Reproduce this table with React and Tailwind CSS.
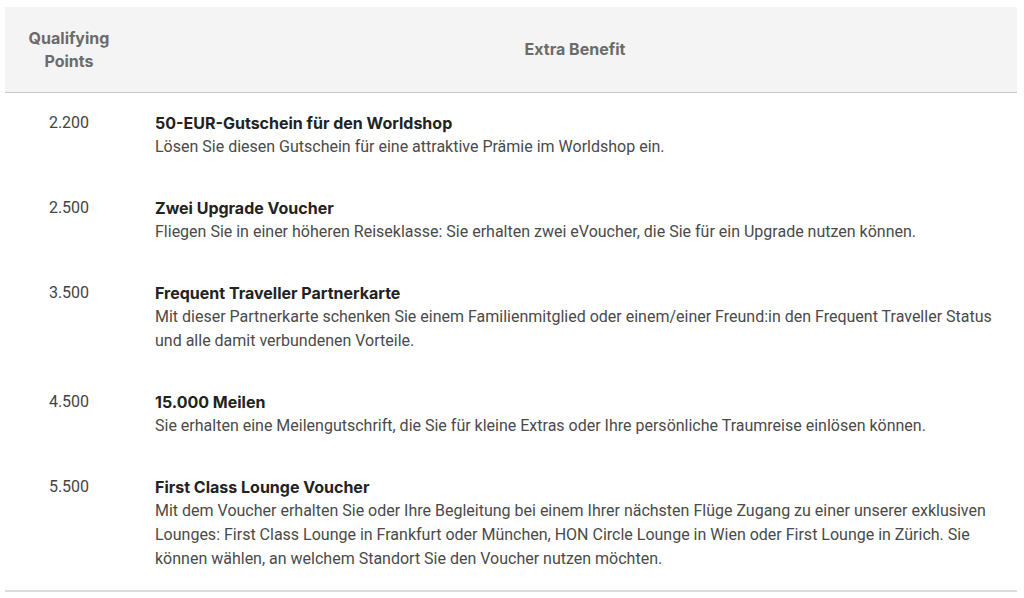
import React from "react";

const rows = [
  {
    pts: "2.200",
    title: "50-EUR-Gutschein für den Worldshop",
    desc: "Lösen Sie diesen Gutschein für eine attraktive Prämie im Worldshop ein.",
  },
  {
    pts: "2.500",
    title: "Zwei Upgrade Voucher",
    desc: "Fliegen Sie in einer höheren Reiseklasse: Sie erhalten zwei eVoucher, die Sie für ein Upgrade nutzen können.",
  },
  {
    pts: "3.500",
    title: "Frequent Traveller Partnerkarte",
    desc: "Mit dieser Partnerkarte schenken Sie einem Familienmitglied oder einem/einer Freund:in den Frequent Traveller Status und alle damit verbundenen Vorteile.",
  },
  {
    pts: "4.500",
    title: "15.000 Meilen",
    desc: "Sie erhalten eine Meilengutschrift, die Sie für kleine Extras oder Ihre persönliche Traumreise einlösen können.",
  },
  {
    pts: "5.500",
    title: "First Class Lounge Voucher",
    desc: "Mit dem Voucher erhalten Sie oder Ihre Begleitung bei einem Ihrer nächsten Flüge Zugang zu einer unserer exklusiven Lounges: First Class Lounge in Frankfurt oder München, HON Circle Lounge in Wien oder First Lounge in Zürich. Sie können wählen, an welchem Standort Sie den Voucher nutzen möchten.",
  },
];

export default function App() {
  return (
    <div
      className="w-[1024px] h-[598px] bg-white pt-[7px] px-[5px]"
      style={{ fontFamily: "Roboto, 'Liberation Sans', sans-serif" }}
    >
      <div className="w-[1012px] border-b-2 border-[#dcdcdc]">
        <div
          className="flex h-[86px] bg-[#f4f4f4] border-b border-[#c8c8c8] text-[16px] font-bold text-[#6b6b6b] leading-[23px]"
          style={{ fontFamily: "Inter, 'Liberation Sans', sans-serif" }}
        >
          <div className="w-[128px] flex items-center justify-center text-center">
            Qualifying
            <br />
            Points
          </div>
          <div className="flex-1 flex items-center justify-center">Extra Benefit</div>
        </div>
        {rows.map((r) => (
          <div key={r.pts} className="flex pt-[18px] pb-[19px] text-[16px] leading-[24px]">
            <div className="w-[128px] text-center text-[#444444]">{r.pts}</div>
            <div className="flex-1 pl-[22px] pr-[22px]">
              <div
                className="font-bold text-[16px] text-[#222222]"
                style={{ fontFamily: "Inter, 'Liberation Sans', sans-serif" }}
              >
                {r.title}
              </div>
              <div className="text-[#4a4a4a]">{r.desc}</div>
            </div>
          </div>
        ))}
      </div>
    </div>
  );
}
